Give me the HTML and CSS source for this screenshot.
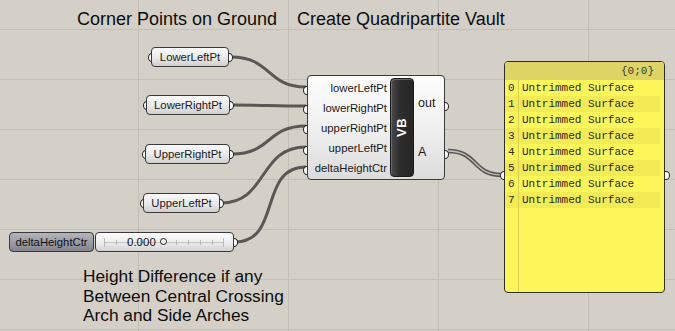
FILE: index.html
```html
<!DOCTYPE html>
<html>
<head>
<meta charset="utf-8">
<link rel="stylesheet" href="styles.css">
</head>
<body>
<div class="canvas">
  <svg class="wires" width="675" height="331" viewBox="0 0 675 331">
    <g class="wire">
      <path d="M231,57 C272,57 266,87 306,87"/>
      <path d="M232,105 C270,105 268,106 306,106"/>
      <path d="M232,154 C272,154 266,126 306,126"/>
      <path d="M221,203 C268,203 258,147 306,147"/>
      <path d="M235,242 C282,242 258,167 306,167"/>
    </g>
    <path class="list-outer" d="M448,151 C478,151 472,175 502,175"/>
    <path class="list-inner" d="M448,151 C478,151 472,175 502,175"/>
  </svg>

  <div class="note title-1">Corner Points on Ground</div>
  <div class="note title-2">Create Quadripartite Vault</div>
  <div class="note note-bottom">Height Difference if any<br>Between Central Crossing<br>Arch and Side Arches</div>

  <div class="param p-ll"><span class="port in"></span>LowerLeftPt<span class="port out"></span></div>
  <div class="param p-lr"><span class="port in"></span>LowerRightPt<span class="port out"></span></div>
  <div class="param p-ur"><span class="port in"></span>UpperRightPt<span class="port out"></span></div>
  <div class="param p-ul"><span class="port in"></span>UpperLeftPt<span class="port out"></span></div>

  <div class="slider">
    <div class="slider-label">deltaHeightCtr</div>
    <div class="slider-track">
      <svg class="ticks" width="136" height="19" viewBox="0 0 136 19">
        <line x1="8" y1="9.5" x2="128" y2="9.5" stroke="#c4c4c4" stroke-width="1"/>
        <g stroke="#b8b8b8" stroke-width="1">
          <line x1="8.5" y1="5" x2="8.5" y2="14"/>
          <line x1="20.5" y1="7" x2="20.5" y2="12"/>
          <line x1="32.5" y1="7" x2="32.5" y2="12"/>
          <line x1="44.5" y1="7" x2="44.5" y2="12"/>
          <line x1="80.5" y1="7" x2="80.5" y2="12"/>
          <line x1="92.5" y1="7" x2="92.5" y2="12"/>
          <line x1="104.5" y1="7" x2="104.5" y2="12"/>
          <line x1="116.5" y1="7" x2="116.5" y2="12"/>
          <line x1="127.5" y1="5" x2="127.5" y2="14"/>
        </g>
      </svg>
      <span class="slider-value">0.000</span>
      <span class="knob"></span>
      <span class="port out"></span>
    </div>
  </div>

  <div class="comp">
    <span class="port in" style="top:10px"></span>
    <span class="port in" style="top:29px"></span>
    <span class="port in" style="top:49px"></span>
    <span class="port in" style="top:70px"></span>
    <span class="port in" style="top:90px"></span>
    <div class="comp-inputs">
      <div>lowerLeftPt</div>
      <div>lowerRightPt</div>
      <div>upperRightPt</div>
      <div>upperLeftPt</div>
      <div>deltaHeightCtr</div>
    </div>
    <div class="comp-bar"><span>VB</span></div>
    <div class="comp-outputs">
      <div>out</div>
      <div>A</div>
    </div>
    <span class="port out" style="top:26px"></span>
    <span class="port out" style="top:74px"></span>
  </div>

  <div class="panel">
    <span class="port in"></span>
    <span class="port out"></span>
    <div class="panel-head">{0;0}</div>
    <div class="panel-rows">
      <div class="row"><span class="idx">0</span><span>Untrimmed Surface</span></div>
      <div class="row"><span class="idx">1</span><span>Untrimmed Surface</span></div>
      <div class="row"><span class="idx">2</span><span>Untrimmed Surface</span></div>
      <div class="row"><span class="idx">3</span><span>Untrimmed Surface</span></div>
      <div class="row"><span class="idx">4</span><span>Untrimmed Surface</span></div>
      <div class="row"><span class="idx">5</span><span>Untrimmed Surface</span></div>
      <div class="row"><span class="idx">6</span><span>Untrimmed Surface</span></div>
      <div class="row"><span class="idx">7</span><span>Untrimmed Surface</span></div>
    </div>
  </div>
</div>
</body>
</html>
```

FILE: styles.css
```css
* { box-sizing: border-box; }
html, body { margin: 0; padding: 0; }
body {
  width: 675px;
  height: 331px;
  overflow: hidden;
  background: #d4d0c8;
  font-family: "Liberation Sans", Arial, sans-serif;
}
.canvas {
  position: relative;
  z-index: 0;
  width: 675px;
  height: 331px;
  background-color: #d4d0c8;
  background-image:
    linear-gradient(to right, #c3bfb7 1px, transparent 1px),
    linear-gradient(to bottom, #c3bfb7 1px, transparent 1px);
  background-size: 150px 331px, 675px 50px;
  background-position: 138px 0, 0 29px;
}
.wires {
  position: absolute;
  left: 0;
  top: 0;
  z-index: -2;
}
.wire path {
  fill: none;
  stroke: #5a5856;
  stroke-width: 3;
}
.list-outer {
  fill: none;
  stroke: #5a5856;
  stroke-width: 4.5;
}
.list-inner {
  fill: none;
  stroke: #c8c4bc;
  stroke-width: 1.3;
}

.note {
  position: absolute;
  color: #0c0c0c;
  font-size: 18px;
  line-height: 20px;
  white-space: nowrap;
}
.title-1 { left: 77px; top: 9px; }
.title-2 { left: 297px; top: 9px; }
.note-bottom { left: 83px; top: 267px; font-size: 17.3px; line-height: 19.5px; }

.port {
  position: absolute;
  width: 8px;
  height: 9px;
  border: 1.5px solid #1e1e1e;
  background: #fff;
  border-radius: 50%;
  z-index: -1;
}
.param .port, .slider .port { top: 50%; margin-top: -4.5px; }
.port.in { left: -4px; }
.port.out { right: -5px; }

.param {
  position: absolute;
  height: 20px;
  border: 1px solid #3a3a3a;
  border-radius: 4px;
  background: linear-gradient(#fbfbfb, #e9e9e9 55%, #cfcfcf);
  font-size: 11.3px;
  line-height: 18px;
  color: #1a1a1a;
  text-align: center;
}
.p-ll { left: 151px; top: 47px; width: 78px; }
.p-lr { left: 146px; top: 95px; width: 84px; }
.p-ur { left: 145px; top: 144px; width: 85px; }
.p-ul { left: 143px; top: 193px; width: 77px; }

.slider {
  position: absolute;
  left: 9px;
  top: 232px;
  width: 225px;
  height: 20px;
  display: flex;
  gap: 1px;
}
.slider-label {
  width: 85px;
  height: 20px;
  border: 1px solid #3a3a3a;
  border-radius: 4px;
  background: linear-gradient(#b4b4bc, #9a9aa4 55%, #84848d);
  font-size: 11.3px;
  line-height: 18px;
  color: #111;
  text-align: center;
}
.slider-track {
  position: relative;
  flex: 1;
  height: 20px;
  border: 1px solid #3a3a3a;
  border-radius: 4px;
  background: linear-gradient(#fcfcfc, #ececec 55%, #d2d2d2);
}
.ticks { position: absolute; left: 0; top: 0; }
.slider-value {
  position: absolute;
  left: 31px;
  top: 0;
  font-size: 11.5px;
  line-height: 18px;
  color: #111;
}
.knob {
  position: absolute;
  left: 64px;
  top: 5px;
  width: 7px;
  height: 7px;
  border: 1.6px solid #111;
  border-radius: 50%;
  background: #fff;
}

.comp {
  position: absolute;
  left: 307px;
  top: 75px;
  width: 138px;
  height: 105px;
  border: 1px solid #3a3a3a;
  border-radius: 4px;
  background: linear-gradient(#fdfdfd, #f0f0f0 50%, #dcdcdc);
  display: flex;
  padding: 2px 2px 2px 0;
}
.comp .port.in { left: -5px; }
.comp .port.out { right: -5px; }
.comp-inputs {
  width: 79px;
  display: flex;
  flex-direction: column;
  font-size: 11.3px;
  color: #1a1a1a;
  text-align: right;
}
.comp-inputs div { height: 20px; line-height: 20px; }
.comp-bar {
  width: 24px;
  margin-left: 3px;
  height: 99px;
  border-radius: 4px;
  background: linear-gradient(to right, #4a4a4a, #2e2e2e 40%, #262626);
  border: 1px solid #1a1a1a;
  box-shadow: inset 1px 1px 0 #6a6a6a;
  display: flex;
  align-items: center;
  justify-content: center;
}
.comp-bar span {
  transform: rotate(-90deg);
  color: #fff;
  font-weight: bold;
  font-size: 13px;
  letter-spacing: 0.5px;
}
.comp-outputs {
  flex: 1;
  display: flex;
  flex-direction: column;
  padding-left: 4px;
  font-size: 12.5px;
  color: #1a1a1a;
}
.comp-outputs div { flex: 1; display: flex; align-items: center; }

.panel {
  position: absolute;
  left: 504px;
  top: 61px;
  width: 161px;
  height: 232px;
  border: 1px solid #2e2e2a;
  border-radius: 4px;
  background: #fdf65a;
  font-family: "Liberation Mono", "Courier New", monospace;
  font-size: 11px;
  color: #2a2a1a;
}
.panel .port { top: 109px; }
.panel .port.in { left: -5px; }
.panel .port.out { right: -6px; }
.panel::before {
  content: "";
  position: absolute;
  left: 13px;
  top: 18px;
  bottom: 0;
  width: 1px;
  background: #d6cf50;
}
.panel-head {
  height: 18px;
  line-height: 18px;
  background: #dcd566;
  border-radius: 3px 3px 0 0;
  text-align: right;
  padding-right: 10px;
  color: #3a3a2a;
}
.panel-rows { padding-right: 4px; }
.row {
  height: 16px;
  line-height: 16px;
  display: flex;
}
.row:nth-child(even) { background: #f2eb55; }
.idx { width: 17px; padding-left: 3px; }
```
